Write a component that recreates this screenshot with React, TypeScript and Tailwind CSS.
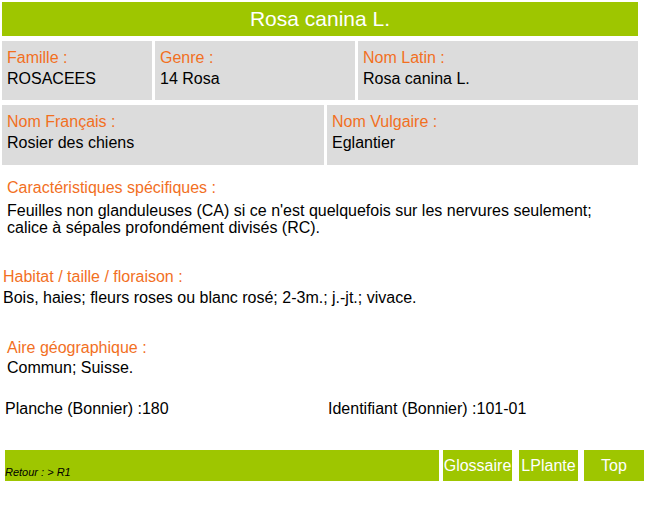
import React from 'react';

interface CellProps {
    label: string;
    value: string;
    width: string;
}

const Cell: React.FC<CellProps> = ({ label, value, width }) => (
    <div className={`${width} h-full bg-[#dcdcdc] pl-[5px] pt-[6px] leading-[21px]`}>
        <div className="text-[#f2701f]">{label}</div>
        <div>{value}</div>
    </div>
);

const App: React.FC = () => {
    return (
        <div className="w-[654px] h-[529px] bg-white text-black text-[16px] font-['Liberation_Sans',Arial,sans-serif] overflow-hidden">
            <div className="ml-[2px] mt-[2px] w-[636px] h-[34px] bg-[#9ec600] flex items-center justify-center text-white text-[21px]">
                Rosa canina L.
            </div>

            {/* fiche : famille / genre / nom latin */}
            <div className="ml-[2px] mt-[5px] h-[59px] flex gap-[3px]">
                <Cell width="w-[150px]" label="Famille :" value="ROSACEES" />
                <Cell width="w-[200px]" label="Genre :" value="14 Rosa" />
                <Cell width="w-[280px]" label="Nom Latin :" value="Rosa canina L." />
            </div>
            <div className="ml-[2px] mt-[5px] h-[60px] flex gap-[3px]">
                <Cell width="w-[322px]" label="Nom Français :" value="Rosier des chiens" />
                <Cell width="w-[311px]" label="Nom Vulgaire :" value="Eglantier" />
            </div>

            <div className="pl-[7px] mt-[12px]">
                <div className="leading-[21px] text-[#f2701f]">Caractéristiques spécifiques :</div>
                <div className="mt-[4px] leading-[17px]">
                    Feuilles non glanduleuses (CA) si ce n'est quelquefois sur les nervures seulement;
                    <br />
                    calice à sépales profondément divisés (RC).
                </div>
            </div>

            <div className="pl-[3px] mt-[30px]">
                <div className="leading-[21px] text-[#f2701f]">Habitat / taille / floraison :</div>
                <div className="mt-[2px] leading-[17px]">Bois, haies; fleurs roses ou blanc rosé; 2-3m.; j.-jt.; vivace.</div>
            </div>

            <div className="pl-[7px] mt-[31px]">
                <div className="leading-[21px] text-[#f2701f]">Aire géographique :</div>
                <div className="mt-[1px] leading-[17px]">Commun; Suisse.</div>
            </div>

            <div className="mt-[24px] flex leading-[17px]">
                <div className="w-[328px] pl-[5px]">Planche (Bonnier) :180</div>
                <div>Identifiant (Bonnier) :101-01</div>
            </div>

            <div className="ml-[5px] mt-[33px] h-[31px] flex">
                <div className="w-[434px] bg-[#9ec600] flex items-end pb-[2px] text-[11px] leading-[13px] italic">Retour : &gt; R1</div>
                <div className="ml-[4px] w-[69px] bg-[#9ec600] flex items-center justify-center text-white text-[16px]">Glossaire</div>
                <div className="ml-[7px] w-[59px] bg-[#9ec600] flex items-center justify-center text-white text-[16px]">LPlante</div>
                <div className="ml-[6px] w-[60px] bg-[#9ec600] flex items-center justify-center text-white text-[16px]">Top</div>
            </div>
        </div>
    );
};

export default App;
